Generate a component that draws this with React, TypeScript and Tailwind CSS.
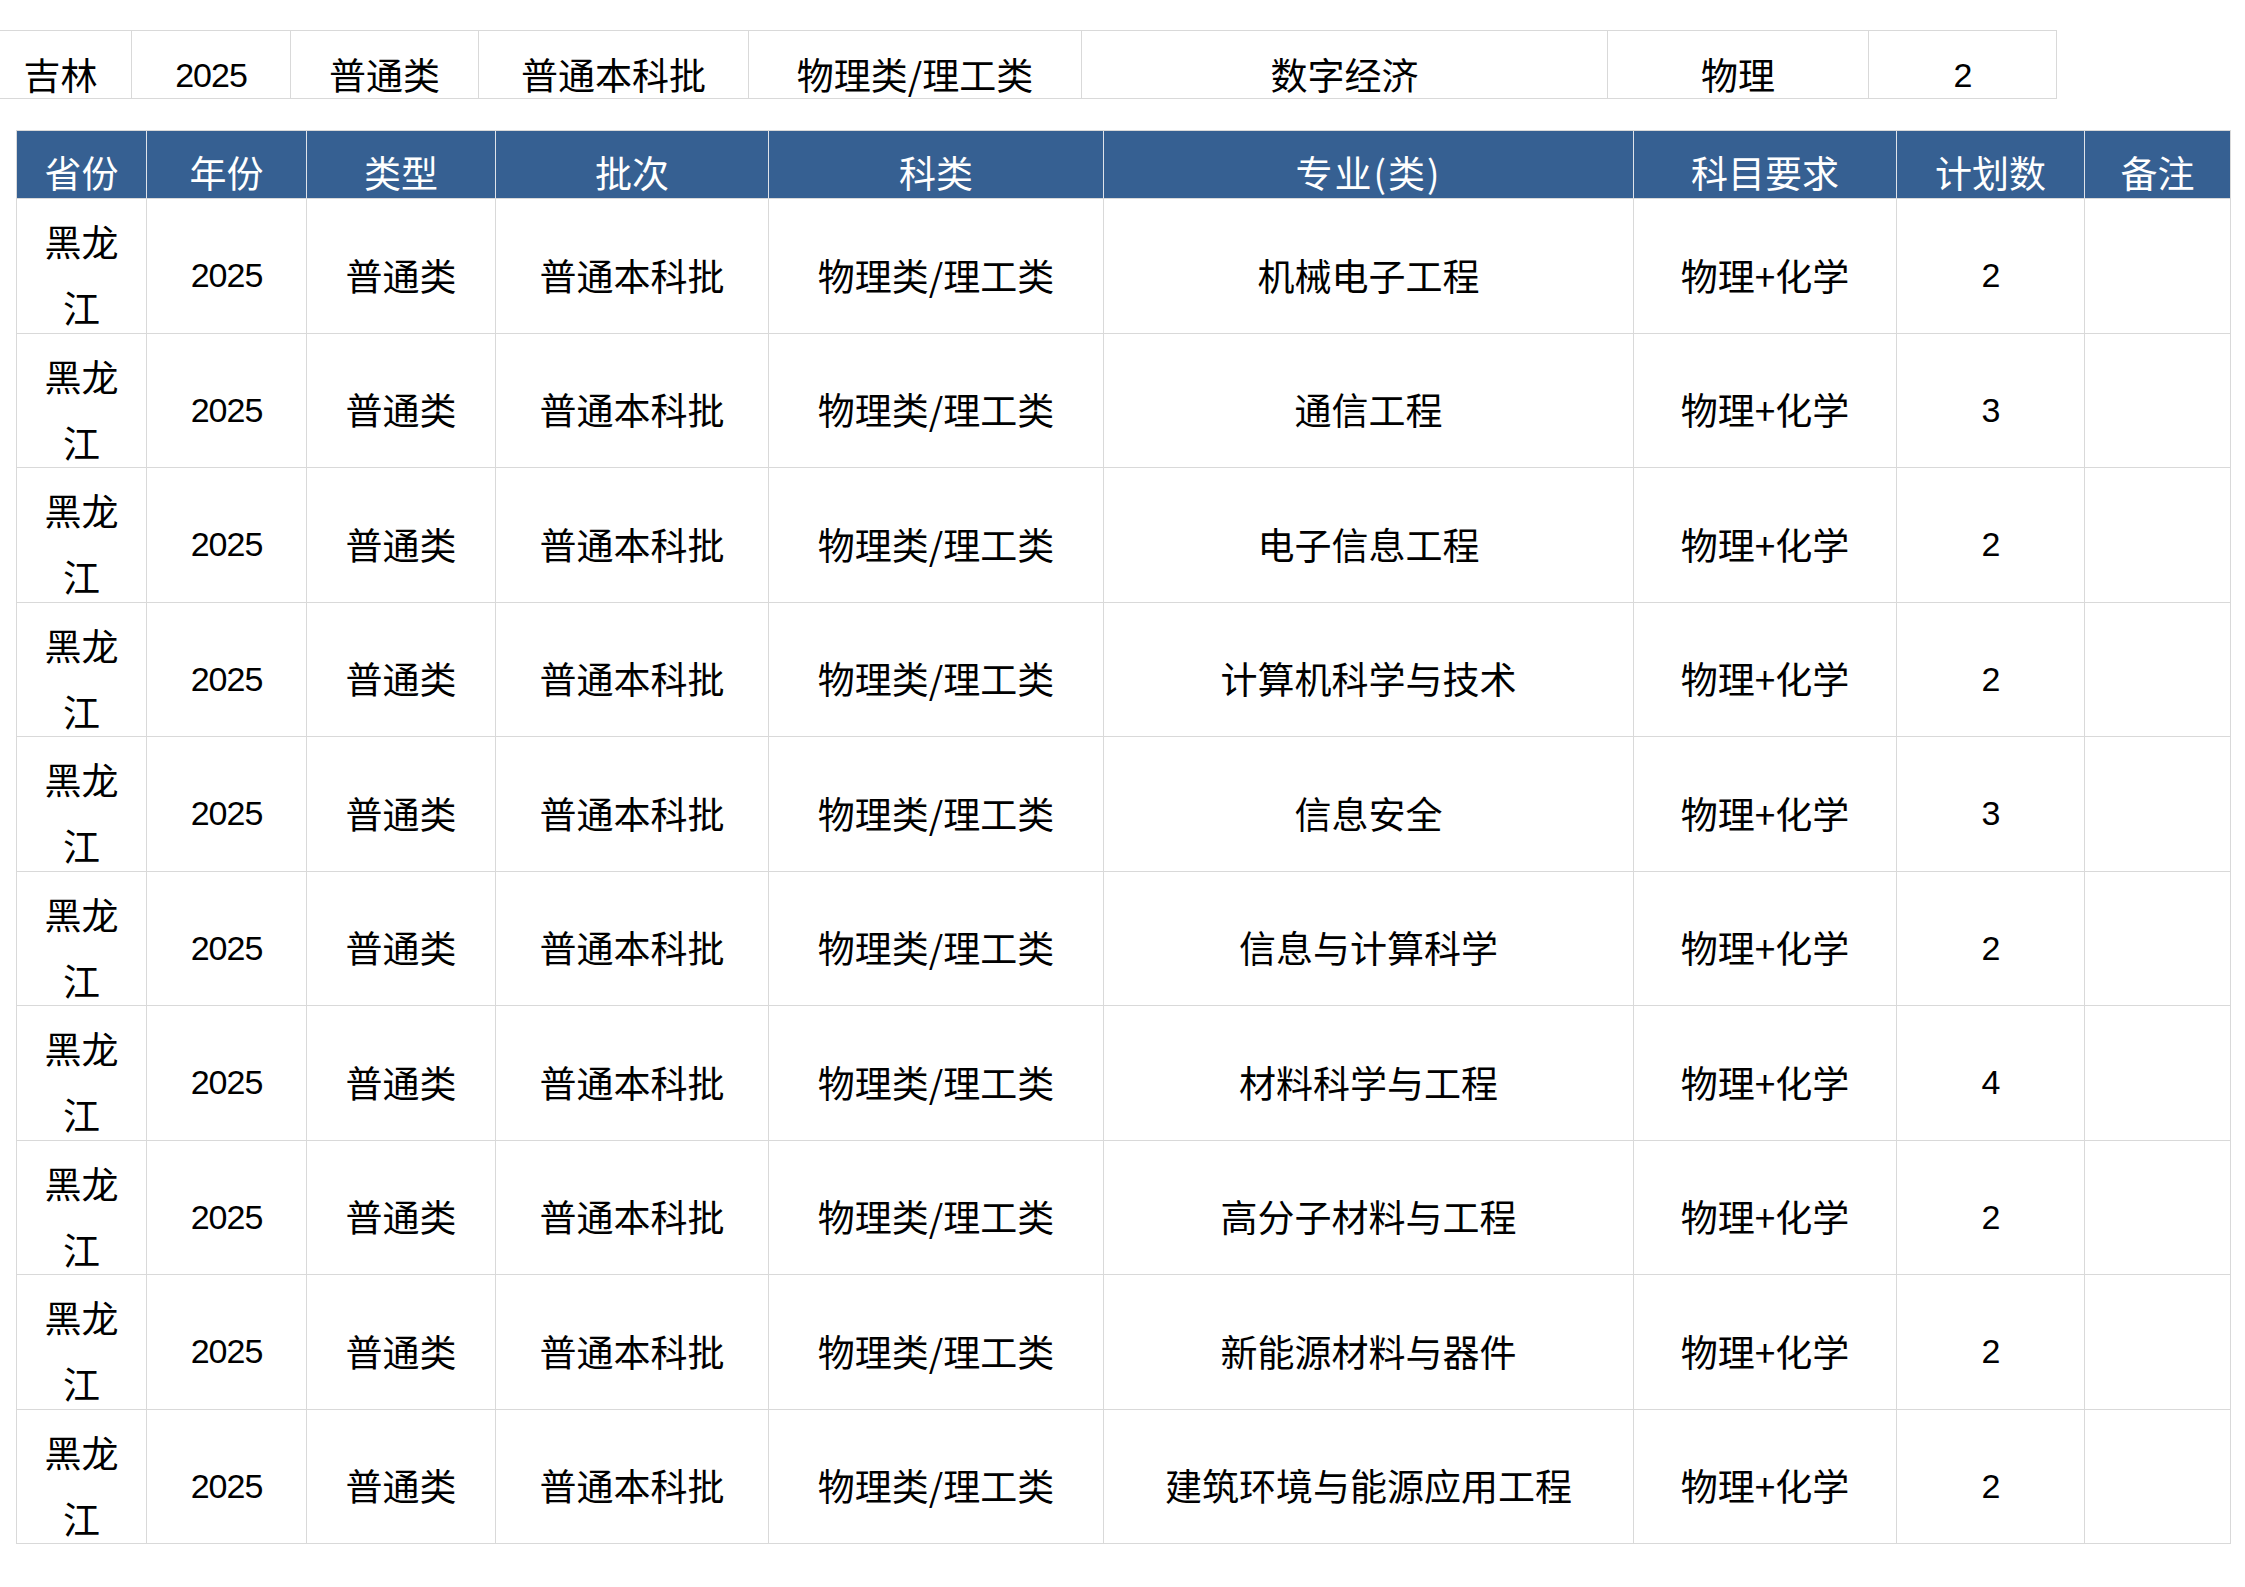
import React from "react";

const CJK = "font-['Noto_Sans_CJK_SC','Noto_Sans_CJK_JP',sans-serif] text-[37px]";
const NUM = "font-['Liberation_Sans','Noto_Sans_CJK_SC',sans-serif] text-[34px]";

const rows: [string, string][] = [
  ["机械电子工程", "2"],
  ["通信工程", "3"],
  ["电子信息工程", "2"],
  ["计算机科学与技术", "2"],
  ["信息安全", "3"],
  ["信息与计算科学", "2"],
  ["材料科学与工程", "4"],
  ["高分子材料与工程", "2"],
  ["新能源材料与器件", "2"],
  ["建筑环境与能源应用工程", "2"],
];

const headers = ["省份", "年份", "类型", "批次", "科类", "专业(类)", "科目要求", "计划数", "备注"];

function Cell({ children, num, extra }: { children?: React.ReactNode; num?: boolean; extra?: string }) {
  return (
    <div
      className={
        "flex min-h-0 items-center justify-center overflow-visible border-r border-b border-[#d9d9d9] leading-none text-black whitespace-nowrap " +
        (num ? NUM + " tracking-[-1px]" : CJK) +
        (extra ? " " + extra : " pt-[18px]")
      }
    >
      {children}
    </div>
  );
}

export default function App() {
  return (
    <div className="min-h-[1587px] w-[2245px] bg-white">
      {/* top single row */}
      <div className="pt-[30px]">
        <div className="grid h-[69px] w-[2057px] grid-cols-[132px_159px_188px_270px_333px_526px_261px_188px] grid-rows-[68px] border-t border-[#d9d9d9]">
          <Cell extra="pr-[10px] pt-[20px]">吉林</Cell>
          <Cell num extra="pt-[20px]">2025</Cell>
          <Cell extra="pt-[20px]">普通类</Cell>
          <Cell extra="pt-[20px]">普通本科批</Cell>
          <Cell extra="pt-[20px]">物理类/理工类</Cell>
          <Cell extra="pt-[20px]">数字经济</Cell>
          <Cell extra="pt-[20px]">物理</Cell>
          <Cell num extra="pt-[20px]">2</Cell>
        </div>
      </div>

      {/* main table */}
      <div className="ml-[16px] mt-[31px] w-[2215px] border-l border-t border-[#d9d9d9]">
        <div className="grid h-[68px] grid-cols-[130px_160px_189px_273px_335px_530px_263px_188px_146px] grid-rows-[68px] bg-[#366092]">
          {headers.map((h, i) => (
            <div
              key={i}
              className={
                "flex items-center justify-center border-b border-[#d9d9d9] pt-[16px] leading-none text-white " +
                CJK +
                (i < headers.length - 1 ? " border-r border-r-[#dfe3ea]" : " border-r")
              }
            >
              {i === 5 ? <span className="tracking-[2px]">{h}</span> : h}
            </div>
          ))}
        </div>
        {rows.map(([major, n], i) => (
          <div
            key={i}
            className={
              "grid grid-cols-[130px_160px_189px_273px_335px_530px_263px_188px_146px] " +
              (i % 2 === 0 ? "h-[135px] grid-rows-[135px]" : "h-[134px] grid-rows-[134px]")
            }
          >
            <div
              className={
                "flex min-h-0 items-center justify-center overflow-visible border-r border-b border-[#d9d9d9] pt-[16px] text-black " +
                CJK
              }
            >
              <div className="w-[74px] shrink-0 text-center leading-[66px]">黑龙江</div>
            </div>
            <Cell num>2025</Cell>
            <Cell>普通类</Cell>
            <Cell>普通本科批</Cell>
            <Cell>物理类/理工类</Cell>
            <Cell>{major}</Cell>
            <Cell>物理+化学</Cell>
            <Cell num>{n}</Cell>
            <Cell />
          </div>
        ))}
      </div>
    </div>
  );
}
